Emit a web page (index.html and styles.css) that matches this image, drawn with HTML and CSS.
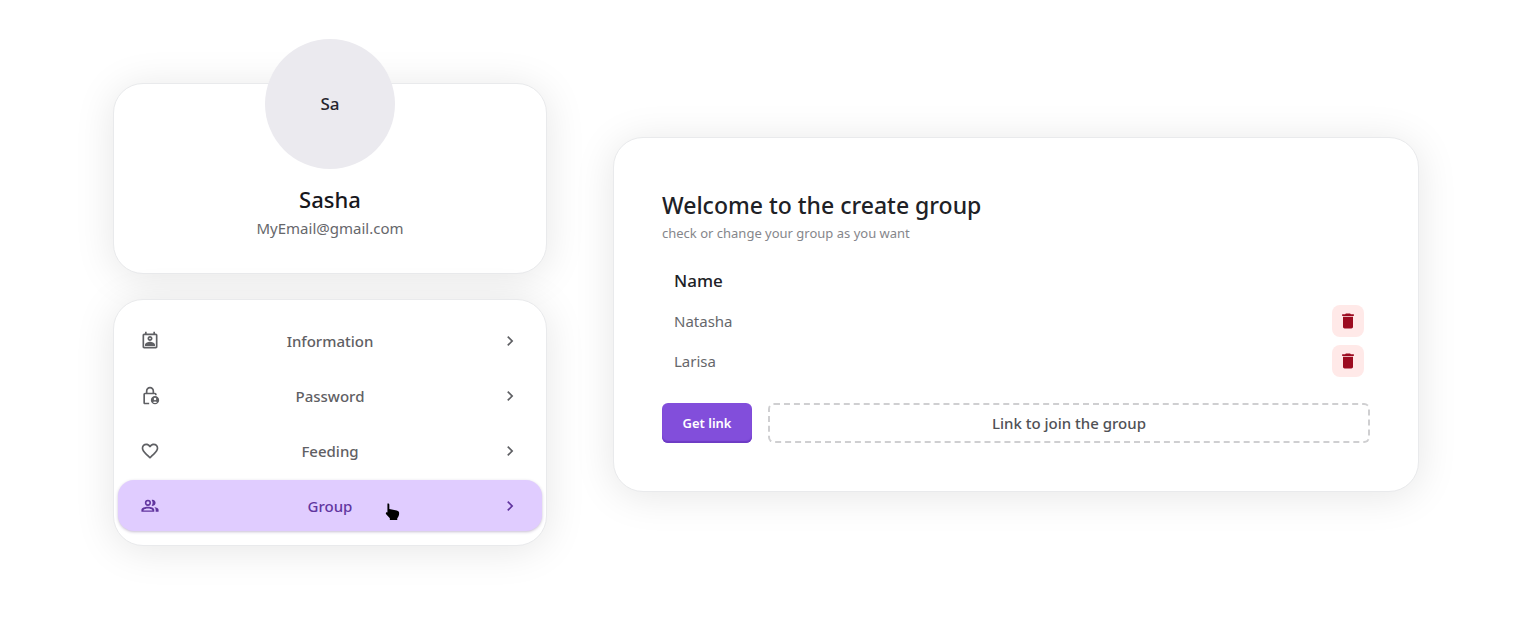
FILE: index.html
```html
<!DOCTYPE html>
<html lang="en">
<head>
<meta charset="utf-8">
<meta name="viewport" content="width=device-width, initial-scale=1">
<title>Profile group</title>
<link rel="stylesheet" href="styles.css">
</head>
<body>
<main class="page">
  <aside class="sidebar">
    <section class="card profile">
      <div class="avatar">Sa</div>
      <h2 class="profile-name">Sasha</h2>
      <p class="profile-email">MyEmail@gmail.com</p>
    </section>
    <nav class="card menu" aria-label="Profile">
      <a class="menu-item" href="#information">
        <svg class="icon" viewBox="0 0 24 24" aria-hidden="true"><path d="M19 3h-1V1h-2v2H8V1H6v2H5c-1.100 0-2 .9-2 2v14c0 1.100.900 2 2 2h14c1.100 0 2-.9 2-2V5c0-1.100-.9-2-2-2zm0 16H5V5h14v14zM12 6c-1.700 0-3 1.300-3 3s1.300 3 3 3 3-1.300 3-3-1.300-3-3-3zm0 4c-.6 0-1-.4-1-1s.4-1 1-1 1 .4 1 1-.4 1-1 1zm6 6.500c0-2.500-4-3.600-6-3.600s-6 1.100-6 3.600V18h12v-1.500z"/></svg>
        <span>Information</span>
        <svg class="icon chevron" viewBox="0 0 24 24" aria-hidden="true"><path d="M10 6 8.600 7.400l4.600 4.600-4.600 4.600L10 18l6-6z"/></svg>
      </a>
      <a class="menu-item" href="#password">
        <svg class="icon" viewBox="0 0 24 24" aria-hidden="true"><path d="M11 22H6c-1.100 0-2-.9-2-2V10c0-1.100.900-2 2-2h1V6c0-2.800 2.200-5 5-5s5 2.200 5 5v2h1c1.100 0 2 .9 2 2v1h-2v-1H6v10h5zM9 8h6V6c0-1.700-1.300-3-3-3S9 4.300 9 6z"/><path fill-rule="evenodd" d="M18 12a5 5 0 1 0 0 10 5 5 0 0 0 0-10zm0 2a1.500 1.500 0 1 1 0 3 1.500 1.500 0 0 1 0-3zm0 6.500c-1 0-2-.5-2.500-1.300.8-.5 1.600-.7 2.500-.7s1.700.2 2.500.7c-.5.8-1.500 1.300-2.500 1.300z"/></svg>
        <span>Password</span>
        <svg class="icon chevron" viewBox="0 0 24 24" aria-hidden="true"><path d="M10 6 8.600 7.400l4.600 4.600-4.600 4.600L10 18l6-6z"/></svg>
      </a>
      <a class="menu-item" href="#feeding">
        <svg class="icon" viewBox="0 0 24 24" aria-hidden="true"><path d="M16.500 3c-1.740 0-3.410.81-4.500 2.090C10.910 3.810 9.240 3 7.500 3 4.420 3 2 5.420 2 8.500c0 3.780 3.400 6.860 8.550 11.540L12 21.350l1.450-1.320C18.600 15.360 22 12.280 22 8.500 22 5.420 19.580 3 16.500 3zm-4.400 15.550-.1.100-.1-.1C7.140 14.240 4 11.390 4 8.500 4 6.500 5.500 5 7.500 5c1.540 0 3.040.99 3.570 2.360h1.870C13.460 5.990 14.960 5 16.500 5c2 0 3.500 1.500 3.500 3.500 0 2.890-3.140 5.740-7.900 10.050z"/></svg>
        <span>Feeding</span>
        <svg class="icon chevron" viewBox="0 0 24 24" aria-hidden="true"><path d="M10 6 8.600 7.400l4.600 4.600-4.600 4.600L10 18l6-6z"/></svg>
      </a>
      <a class="menu-item active" href="#group" aria-current="page">
        <svg class="icon" viewBox="0 0 24 24" aria-hidden="true"><path fill-rule="evenodd" d="M9.500 4.500a3.700 3.700 0 1 0 0 7.400 3.700 3.700 0 0 0 0-7.400zm0 1.900a1.800 1.800 0 1 1 0 3.600 1.800 1.800 0 0 1 0-3.600z"/><path fill-rule="evenodd" d="M1.700 19v-2.300c0-2.200 4-3.700 7.800-3.700s7.600 1.500 7.600 3.700V19zm2.300-1.700h11c-.5-1.200-3-2.200-5.500-2.200s-5 1-5.500 2.200z"/><path d="M14 4.700c2.600-.8 4.700 1.100 4.700 3.500s-2.100 4.300-4.700 3.500c1.500-2.100 1.500-4.900 0-7zM17 13.300c2.900.5 5.300 1.700 5.300 3.400V19h-3.500v-2.300c0-1.300-.7-2.500-1.800-3.400z"/></svg>
        <span>Group</span>
        <svg class="icon chevron" viewBox="0 0 24 24" aria-hidden="true"><path d="M10 6 8.600 7.400l4.600 4.600-4.600 4.600L10 18l6-6z"/></svg>
        <svg class="pointer" viewBox="0 0 14 18" aria-hidden="true"><path d="M2.200 1.500c.9-.5 1.800.1 1.800 1v4.200l7 1.300c1.700.4 2.300 1.200 2.300 2.500 0 2.300-.7 3.700-1.800 5V17H4.500v-1.500L1 11.500c-.9-1 .2-2.300 1.200-1.600z"/></svg>
      </a>
    </nav>
  </aside>
  <section class="card group">
    <h1 class="group-title">Welcome to the create group</h1>
    <p class="group-note">check or change your group as you want</p>
    <table class="members">
      <thead><tr><th scope="col" colspan="2">Name</th></tr></thead>
      <tbody>
        <tr><td>Natasha</td><td class="action"><button class="delete" type="button" aria-label="Delete Natasha"><svg class="trash" viewBox="0 0 24 24" aria-hidden="true"><path d="M6 19c0 1.100.900 2 2 2h8c1.100 0 2-.9 2-2V7H6v12zM19 4h-3.500l-1-1h-5l-1 1H5v2h14V4z"/></svg></button></td></tr>
        <tr><td>Larisa</td><td class="action"><button class="delete" type="button" aria-label="Delete Larisa"><svg class="trash" viewBox="0 0 24 24" aria-hidden="true"><path d="M6 19c0 1.100.900 2 2 2h8c1.100 0 2-.9 2-2V7H6v12zM19 4h-3.500l-1-1h-5l-1 1H5v2h14V4z"/></svg></button></td></tr>
      </tbody>
    </table>
    <div class="invite">
      <button class="get-link" type="button">Get link</button>
      <button class="link-box" type="button">Link to join the group</button>
    </div>
  </section>
</main>
</body>
</html>
```
FILE: styles.css
```css
* { box-sizing: border-box; }

body {
  margin: 0;
  background: #fff;
  color: #66676b;
  font-family: "Noto Sans", "Open Sans", sans-serif;
  font-size: 15px;
  line-height: 24px;
}

h1, h2, p { margin: 0; }
button { font: inherit; cursor: pointer; }

.page {
  min-height: 100vh;
  padding: 5px 112px 0 113px;
  display: grid;
  grid-template-columns: 35fr 65fr;
  gap: 66px;
  align-items: center;
}

.sidebar {
  display: flex;
  flex-direction: column;
  gap: 25px;
}

.card {
  border: 1px solid #e9eaec;
  border-radius: 30px;
  background: #fff;
  box-shadow: 0 4px 40px rgba(0, 0, 0, 0.1);
}

.profile {
  display: flex;
  flex-direction: column;
  align-items: center;
  padding-bottom: 32px;
}

.avatar {
  width: 130px;
  height: 130px;
  margin-top: -45px;
  margin-bottom: 14px;
  border-radius: 50%;
  display: flex;
  align-items: center;
  justify-content: center;
  background: #ebeaef;
  color: #25252d;
  font-size: 17px;
  font-weight: 500;
}

.profile-name {
  color: #17171c;
  font-size: 22px;
  line-height: 32px;
  font-weight: 500;
}

.profile-email { line-height: 26px; }

.menu {
  position: relative;
  z-index: 1;
  padding: 15px 4px 14px;
  display: flex;
  flex-direction: column;
  gap: 4px;
}

.menu-item {
  position: relative;
  min-height: 51px;
  padding: 0 22px;
  border-radius: 16px;
  display: flex;
  align-items: center;
  justify-content: space-between;
  color: #5f6064;
  font-weight: 500;
  text-decoration: none;
}

.menu-item.active {
  background: #e0ccff;
  color: #61359f;
  box-shadow: 0 1px 3px rgba(70, 40, 110, 0.3);
}

.icon {
  width: 20px;
  height: 20px;
  fill: currentColor;
}

.pointer {
  position: absolute;
  left: 63%;
  top: 22px;
  width: 15px;
  height: 19px;
  fill: #000;
}

.group { padding: 48px; }

.group-title {
  color: #202126;
  font-size: 23px;
  line-height: 38px;
  font-weight: 500;
}

.group-note {
  color: #85868b;
  font-size: 13px;
  line-height: 18px;
}

.members {
  width: 100%;
  margin-top: 19px;
  border-collapse: collapse;
}

.members th,
.members td {
  height: 40px;
  padding: 0 12px;
  text-align: left;
}

.members th {
  color: #202126;
  font-size: 17px;
  font-weight: 500;
}

.members .action {
  width: 56px;
  padding: 0 6px 0 0;
  text-align: right;
}

.delete {
  width: 32px;
  height: 32px;
  padding: 0;
  border: 0;
  border-radius: 8px;
  display: inline-flex;
  align-items: center;
  justify-content: center;
  vertical-align: middle;
  background: #ffe9e8;
}

.trash {
  width: 20px;
  height: 20px;
  fill: #9c0b20;
}

.invite {
  margin-top: 22px;
  display: flex;
  gap: 16px;
}

.get-link {
  height: 40px;
  width: 90px;
  padding: 0;
  border: 0;
  border-radius: 6px;
  background: #824edb;
  box-shadow: inset 0 -2px 1px #6d3bc4;
  color: #fff;
  font-size: 13px;
  font-weight: 600;
}

.link-box {
  flex: 1;
  height: 40px;
  padding: 0;
  border: 2px dashed #cfcfd1;
  border-radius: 6px;
  background: #fff;
  color: #505155;
  font-weight: 500;
}
```
